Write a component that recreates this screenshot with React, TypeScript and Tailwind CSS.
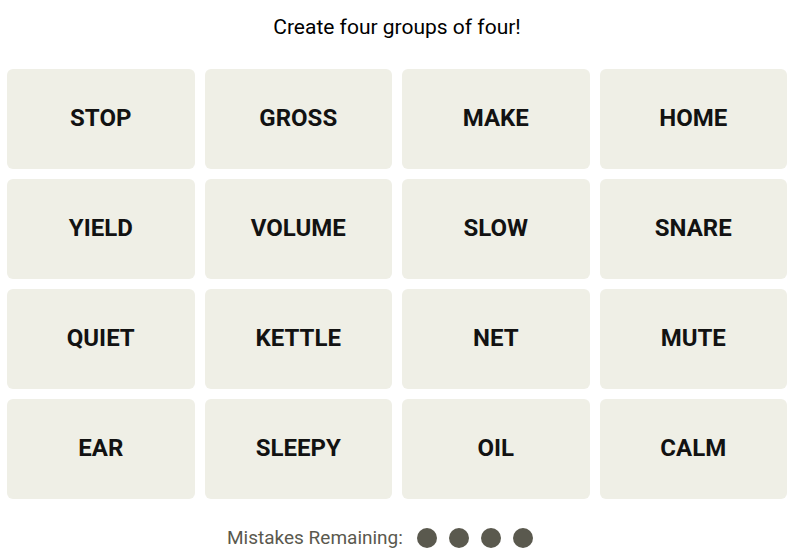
const words = [
  "STOP", "GROSS", "MAKE", "HOME",
  "YIELD", "VOLUME", "SLOW", "SNARE",
  "QUIET", "KETTLE", "NET", "MUTE",
  "EAR", "SLEEPY", "OIL", "CALM",
];

export default function App() {
  return (
    <div className="min-h-screen bg-white">
      <div className="ml-[7px] w-[780px]">
        <p className="pt-[15px] text-center font-['Roboto',sans-serif] text-[21px] leading-[24px] text-black">
          Create four groups of four!
        </p>
        <div className="mt-[30px] grid grid-cols-4 gap-[10px]">
          {words.map((w) => (
            <div
              key={w}
              className="flex h-[100px] items-center justify-center rounded-[6px] bg-[#efefe6] pb-[2px] font-['Roboto',sans-serif] text-[24px] font-bold text-[#121212]"
            >
              {w}
            </div>
          ))}
        </div>
        <div className="mt-[29px] flex items-center gap-[12px] pl-[220px]">
          <span className="mr-[2px] font-['Roboto',sans-serif] text-[19px] leading-[20px] text-[#5a594e]">
            Mistakes Remaining:
          </span>
          {[0, 1, 2, 3].map((i) => (
            <span key={i} className="h-[20px] w-[20px] rounded-full bg-[#5a594e]" />
          ))}
        </div>
      </div>
    </div>
  );
}
